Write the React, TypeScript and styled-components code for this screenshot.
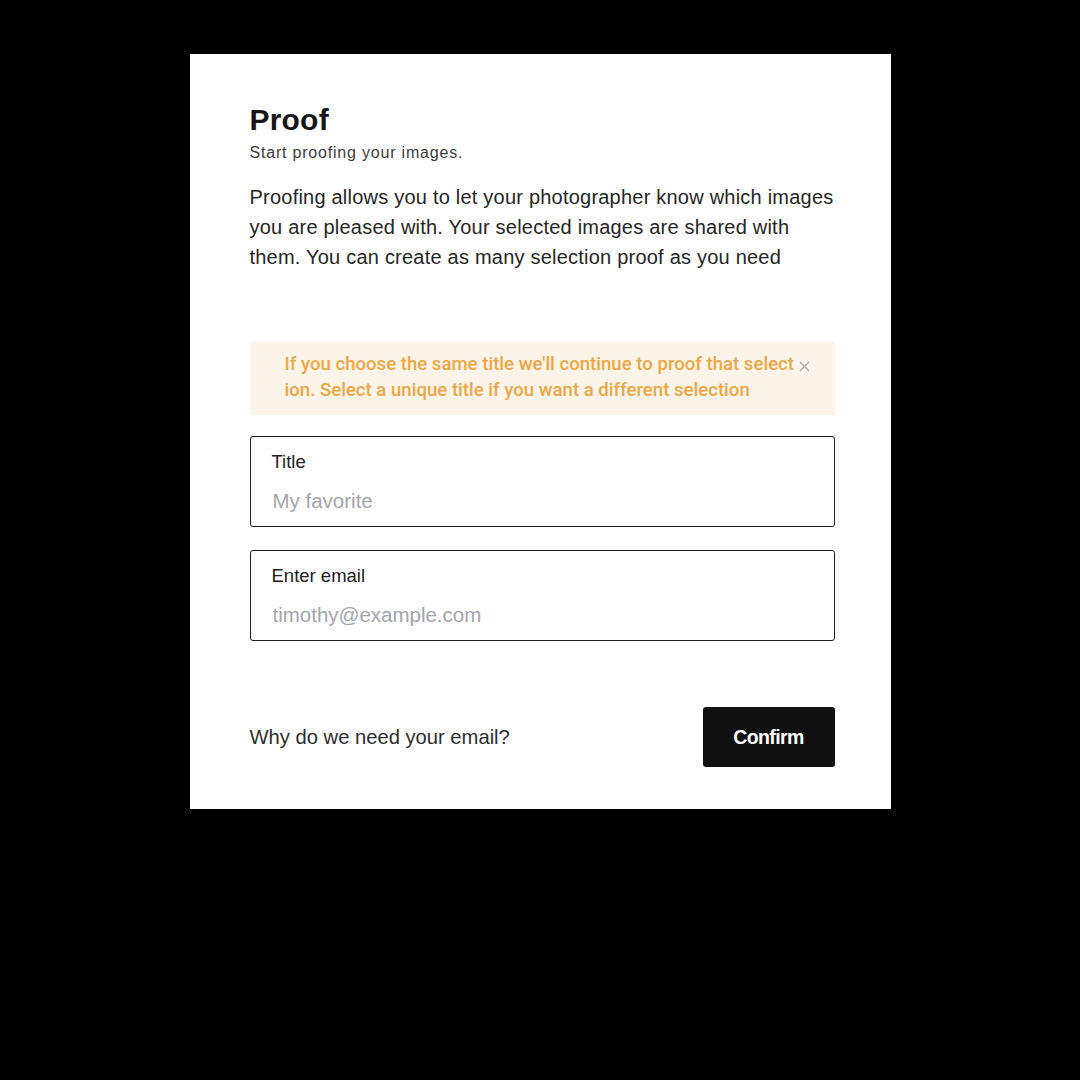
import styled, { createGlobalStyle } from "styled-components";

const GlobalStyle = createGlobalStyle`
  html, body {
    margin: 0;
    padding: 0;
    background: #000;
  }
  body {
    font-family: "Liberation Sans", Arial, sans-serif;
    -webkit-font-smoothing: antialiased;
  }
  * {
    box-sizing: border-box;
  }
`;

const Page = styled.div`
  width: 1080px;
  height: 1080px;
  display: flex;
  justify-content: center;
  align-items: flex-start;
  padding-top: 54px;
  background: #000;
`;

const Card = styled.div`
  width: 701px;
  background: #fff;
  padding: 48px 56px 42px 60px;
  display: flex;
  flex-direction: column;
`;

const Title = styled.h1`
  margin: 0;
  font-size: 30px;
  line-height: 36px;
  font-weight: 700;
  color: #161616;
  letter-spacing: 0.2px;
`;

const Subtitle = styled.p`
  margin: 5px 0 0;
  font-size: 16px;
  line-height: 20px;
  letter-spacing: 0.8px;
  color: #3d3d3d;
`;

const Intro = styled.p`
  margin: 19px 0 0;
  font-size: 20px;
  line-height: 30px;
  letter-spacing: 0.22px;
  color: #262626;
`;

const Alert = styled.div`
  position: relative;
  margin-top: 69px;
  height: 74px;
  background: #fdf4e9;
  padding: 10px 0 0 35px;
`;

const AlertText = styled.p`
  margin: 0;
  width: 511px;
  font-family: Roboto, "Liberation Sans", sans-serif;
  font-weight: 500;
  font-size: 18.6px;
  line-height: 26px;
  color: #eea744;
  word-break: break-all;
`;

const CloseButton = styled.button`
  position: absolute;
  top: 19px;
  right: 24px;
  width: 12px;
  height: 12px;
  padding: 0;
  border: none;
  background: transparent;
  display: flex;
  align-items: center;
  justify-content: center;
  cursor: pointer;
`;

const Fields = styled.div`
  margin-top: 21px;
  display: flex;
  flex-direction: column;
  gap: 23px;
`;

const Field = styled.label`
  display: flex;
  flex-direction: column;
  height: 91px;
  border: 1.5px solid #1e1e1e;
  border-radius: 3px;
  padding: 14px 21px 0;
`;

const FieldLabel = styled.span`
  font-size: 18.5px;
  line-height: 21px;
  color: #222;
`;

const FieldInput = styled.input`
  margin-top: 17px;
  border: none;
  outline: none;
  padding: 0 1px;
  font-family: "Liberation Sans", Arial, sans-serif;
  font-size: 20.5px;
  line-height: 24px;
  color: #222;
  background: transparent;

  &::placeholder {
    color: #a3a6ad;
  }
`;

const Footer = styled.div`
  margin-top: 66px;
  display: flex;
  align-items: center;
  justify-content: space-between;
`;

const HelpText = styled.span`
  font-size: 20.2px;
  color: #2e2e2e;
`;

const ConfirmButton = styled.button`
  width: 132px;
  height: 60px;
  border: none;
  border-radius: 3px;
  background: #111;
  color: #fff;
  font-family: "Liberation Sans", Arial, sans-serif;
  font-weight: 700;
  font-size: 19.5px;
  letter-spacing: -0.6px;
  padding-top: 2px;
  cursor: pointer;
`;

const App = () => {
  return (
    <>
      <GlobalStyle />
      <Page>
        <Card>
          <Title>Proof</Title>
          <Subtitle>Start proofing your images.</Subtitle>
          <Intro>
            Proofing allows you to let your photographer know which images you
            are pleased with. Your selected images are shared with them. You can
            create as many selection proof as you need
          </Intro>

          <Alert>
            <AlertText>
              If you choose the same title we'll continue to proof that
              selection. Select a unique title if you want a different selection
            </AlertText>
            <CloseButton aria-label="Close">
              <svg width="11" height="11" viewBox="0 0 11 11">
                <path
                  d="M1 1L10 10M10 1L1 10"
                  stroke="#a9acb2"
                  strokeWidth="1.2"
                  fill="none"
                />
              </svg>
            </CloseButton>
          </Alert>

          <Fields>
            <Field>
              <FieldLabel>Title</FieldLabel>
              <FieldInput placeholder="My favorite" />
            </Field>
            <Field>
              <FieldLabel>Enter email</FieldLabel>
              <FieldInput type="email" placeholder="timothy@example.com" />
            </Field>
          </Fields>

          <Footer>
            <HelpText>Why do we need your email?</HelpText>
            <ConfirmButton>Confirm</ConfirmButton>
          </Footer>
        </Card>
      </Page>
    </>
  );
};

export default App;
